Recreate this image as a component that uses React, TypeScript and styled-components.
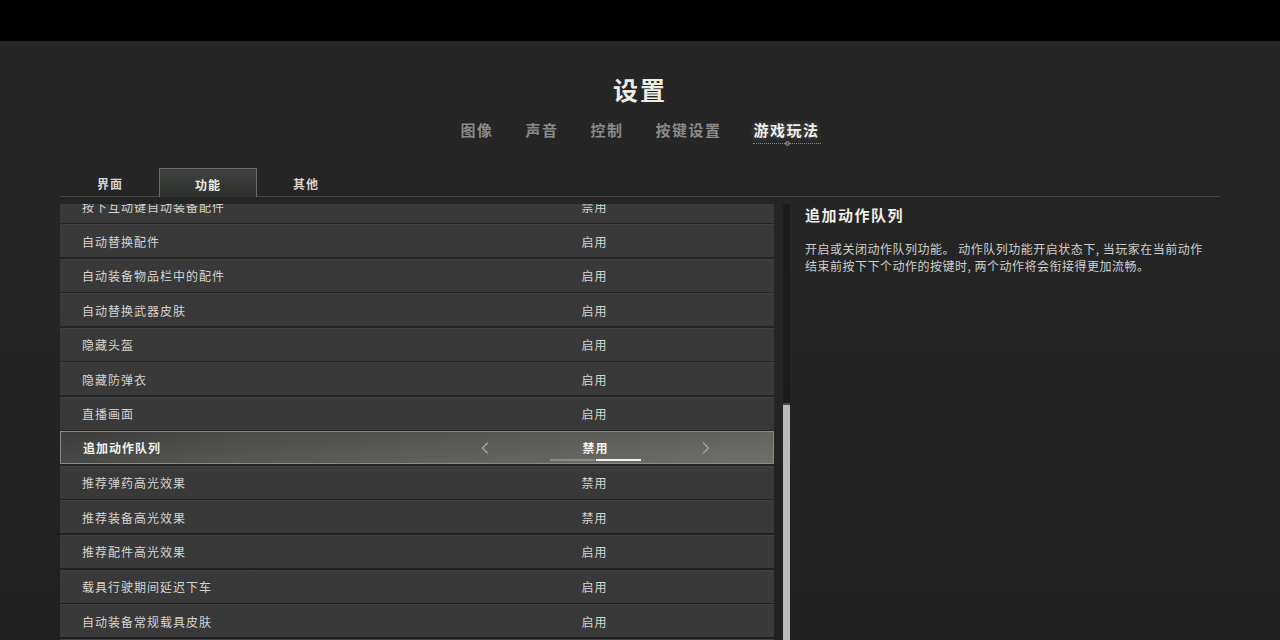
import React from 'react';
import styled, { createGlobalStyle, css } from 'styled-components';
import { ChevronLeft, ChevronRight } from 'lucide-react';

const GlobalStyle = createGlobalStyle`
    html, body {
        margin: 0;
        padding: 0;
        background: #252525;
    }
    body {
        font-family: "Noto Sans CJK SC", "Noto Sans", sans-serif;
    }
`

const Page = styled.div`
    width: 1280px;
    height: 640px;
    overflow: hidden;
    display: flex;
    flex-direction: column;
    background: #252525;
`

const TopBar = styled.div`
    height: 41px;
    flex: none;
    background: #000;
`

const Main = styled.div`
    flex: 1;
    min-height: 0;
    display: flex;
    flex-direction: column;
    padding: 0 60px;
    background: linear-gradient(180deg, #262626 0%, #242424 60%, #202020 100%);
`

const Title = styled.h1`
    margin: 33px 0 0;
    font-size: 25px;
    line-height: 30px;
    font-weight: 700;
    letter-spacing: 2px;
    color: #ecebe4;
    text-align: center;
`

const Nav = styled.div`
    margin-top: 16px;
    display: flex;
    justify-content: center;
    gap: 32px;
    height: 20px;
`

const NavItem = styled.div<{ $active?: boolean }>`
    position: relative;
    font-size: 15px;
    line-height: 20px;
    font-weight: 700;
    letter-spacing: 1.5px;
    color: #8a8a88;
    ${(p) => p.$active && css`
        color: #f1f0ea;
        text-shadow: 0 0 6px rgba(255, 255, 255, 0.25);
        &::after {
            content: '';
            position: absolute;
            left: -1px;
            right: -1px;
            bottom: -4px;
            border-top: 1px dotted #8c8c88;
        }
        &::before {
            content: '';
            position: absolute;
            left: 50%;
            bottom: -6px;
            width: 3px;
            height: 3px;
            margin-left: -2px;
            border-radius: 50%;
            border: 1px solid #9a9a96;
            background: #3a3a3a;
        }
    `}
`

const SubTabBar = styled.div`
    margin-top: 28px;
    display: flex;
    padding-left: 1px;
    border-bottom: 1px solid #454545;
`

const SubTab = styled.div<{ $active?: boolean }>`
    width: 98px;
    height: 28px;
    display: flex;
    align-items: center;
    justify-content: center;
    padding-top: 2px;
    font-size: 12px;
    font-weight: 700;
    letter-spacing: 1px;
    color: #d6d6d2;
    box-sizing: border-box;
    ${(p) => p.$active && css`
        background: linear-gradient(180deg, #3f423f 0%, #2d2f2d 100%);
        border: 1px solid #6a6c6a;
        border-bottom: none;
        margin-bottom: -1px;
        height: 29px;
        color: #f0f0ea;
    `}
`

const Body = styled.div`
    flex: 1;
    min-height: 0;
    display: flex;
    margin-top: 7px;
`

const ListViewport = styled.div`
    width: 714px;
    flex: none;
    overflow: hidden;
`

const List = styled.div`
    margin-top: -14.5px;
    display: flex;
    flex-direction: column;
    gap: 1.55px;
`

const Row = styled.div<{ $selected?: boolean }>`
    position: relative;
    height: 33px;
    box-sizing: border-box;
    display: grid;
    grid-template-columns: 414px 241px 1fr;
    align-items: center;
    background: #393939;
    border-top: 1px solid #414141;
    ${(p) => p.$selected && css`
        background:
            linear-gradient(180deg, rgba(0, 0, 0, 0.08) 0%, rgba(255, 255, 255, 0.04) 100%),
            linear-gradient(90deg, #414140 0%, #51514e 25%, #5b5b57 55%, #6b6b66 100%);
        border: 1px solid #8a8a83;
    `}
`

const Label = styled.div<{ $selected?: boolean }>`
    padding-left: 22px;
    font-size: 12px;
    letter-spacing: 1px;
    color: ${(p) => (p.$selected ? '#f2f2ee' : '#d4d4d0')};
    font-weight: ${(p) => (p.$selected ? 700 : 400)};
    white-space: nowrap;
`

const Control = styled.div`
    position: relative;
    display: flex;
    align-items: center;
    justify-content: space-between;
    height: 100%;
    color: #a8a8a4;
`

const Value = styled.div<{ $selected?: boolean }>`
    flex: 1;
    text-align: center;
    font-size: 12px;
    font-weight: ${(p) => (p.$selected ? 700 : 400)};
    letter-spacing: 1px;
    color: ${(p) => (p.$selected ? '#f4f4f0' : '#d6d6d2')};
`

const Slot = styled.div`
    width: 20px;
    height: 20px;
    display: flex;
`

const Indicator = styled.div`
    position: absolute;
    left: 75px;
    bottom: 2px;
    display: flex;
`

const IndicatorSeg = styled.div<{ $on?: boolean }>`
    width: 45px;
    height: 2px;
    background: ${(p) => (p.$on ? '#f2f2ee' : '#8a8a86')};
    margin-right: 1px;
`

const ScrollTrack = styled.div`
    margin-left: 9px;
    width: 7px;
    flex: none;
    background: #1b1b1b;
    padding-top: 199px;
    box-sizing: border-box;
    display: flex;
`

const ScrollThumb = styled.div`
    width: 6px;
    flex: 1;
    background: #b9b9b7;
    border-top: 2px solid #4a4a4a;
`

const Detail = styled.div`
    flex: 1;
    margin-left: 15px;
    padding-top: 1px;
`

const DetailTitle = styled.h2`
    margin: 0;
    font-size: 15px;
    line-height: 20px;
    font-weight: 700;
    letter-spacing: 1.5px;
    color: #eeede7;
`

const DetailText = styled.p`
    margin: 15px 0 0;
    max-width: 400px;
    font-size: 12px;
    line-height: 17px;
    letter-spacing: 0.5px;
    color: #cfcfcb;
`

type Setting = { label: string; value: string; selected?: boolean };

const settings: Setting[] = [
    { label: '按下互动键自动装备配件', value: '禁用' },
    { label: '自动替换配件', value: '启用' },
    { label: '自动装备物品栏中的配件', value: '启用' },
    { label: '自动替换武器皮肤', value: '启用' },
    { label: '隐藏头盔', value: '启用' },
    { label: '隐藏防弹衣', value: '启用' },
    { label: '直播画面', value: '启用' },
    { label: '追加动作队列', value: '禁用', selected: true },
    { label: '推荐弹药高光效果', value: '禁用' },
    { label: '推荐装备高光效果', value: '禁用' },
    { label: '推荐配件高光效果', value: '启用' },
    { label: '载具行驶期间延迟下车', value: '启用' },
    { label: '自动装备常规载具皮肤', value: '启用' },
    { label: '自动装备载具皮肤', value: '启用' },
];

const navItems = ['图像', '声音', '控制', '按键设置', '游戏玩法'];
const subTabs = ['界面', '功能', '其他'];

const App: React.FC = () => {
    return (
        <Page>
            <GlobalStyle />
            <TopBar />
            <Main>
                <Title>设置</Title>
                <Nav>
                    {navItems.map((n) => (
                        <NavItem key={n} $active={n === '游戏玩法'}>{n}</NavItem>
                    ))}
                </Nav>
                <SubTabBar>
                    {subTabs.map((t) => (
                        <SubTab key={t} $active={t === '功能'}>{t}</SubTab>
                    ))}
                </SubTabBar>
                <Body>
                    <ListViewport>
                        <List>
                            {settings.map((s) => (
                                <Row key={s.label} $selected={s.selected}>
                                    <Label $selected={s.selected}>{s.label}</Label>
                                    <Control>
                                        <Slot>{s.selected && <ChevronLeft size={20} strokeWidth={1.3} />}</Slot>
                                        <Value $selected={s.selected}>{s.value}</Value>
                                        <Slot>{s.selected && <ChevronRight size={20} strokeWidth={1.3} />}</Slot>
                                        {s.selected && (
                                            <Indicator>
                                                <IndicatorSeg />
                                                <IndicatorSeg $on />
                                            </Indicator>
                                        )}
                                    </Control>
                                    <div />
                                </Row>
                            ))}
                        </List>
                    </ListViewport>
                    <ScrollTrack>
                        <ScrollThumb />
                    </ScrollTrack>
                    <Detail>
                        <DetailTitle>追加动作队列</DetailTitle>
                        <DetailText>
                            开启或关闭动作队列功能。 动作队列功能开启状态下, 当玩家在当前动作结束前按下下个动作的按键时, 两个动作将会衔接得更加流畅。
                        </DetailText>
                    </Detail>
                </Body>
            </Main>
        </Page>
    );
};

export default App;
